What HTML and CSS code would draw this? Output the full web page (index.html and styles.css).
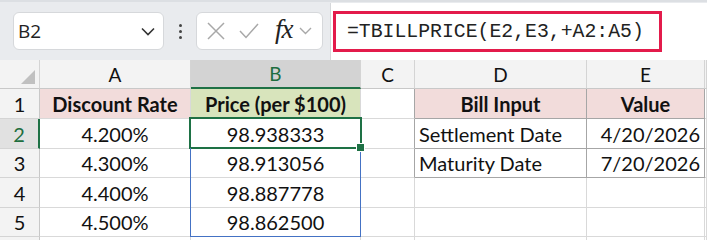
FILE: index.html
```html
<!DOCTYPE html>
<html lang="en">
<head>
  <meta charset="UTF-8" />
  <title>TBILLPRICE</title>
  <link rel="stylesheet" href="styles.css">
</head>
<body>
  <div class="toolbar">
    <div class="namebox">
      <span>B2</span>
      <svg class="chev" width="14" height="9" viewBox="0 0 14 9"><path d="M1 1.5 L7 7.5 L13 1.5" fill="none" stroke="#333" stroke-width="1.6"/></svg>
    </div>
    <div class="dots"><i></i><i></i><i></i></div>
    <div class="fxbox">
      <svg width="18" height="18" viewBox="0 0 18 18"><path d="M1 1 L17 17 M17 1 L1 17" stroke="#a8a8a8" stroke-width="1.5"/></svg>
      <svg width="20" height="16" viewBox="0 0 20 16"><path d="M1 8 L7 14.5 L19 1" fill="none" stroke="#a8a8a8" stroke-width="1.5"/></svg>
      <span class="fx">fx</span>
      <svg width="13" height="8" viewBox="0 0 13 8"><path d="M1 1 L6.5 6.5 L12 1" fill="none" stroke="#a8a8a8" stroke-width="1.4"/></svg>
    </div>
    <div class="formula">
      <div class="mark">=TBILLPRICE(E2,E3,+A2:A5)</div>
    </div>
  </div>

  <div class="sheet">
    <div class="hd corner"></div>
    <div class="hd">A</div>
    <div class="hd sel">B</div>
    <div class="hd">C</div>
    <div class="hd">D</div>
    <div class="hd">E</div>
    <div class="hd end"></div>

    <div class="rh">1</div>
    <div class="c pink b">Discount Rate</div>
    <div class="c green b">Price (per $100)</div>
    <div class="c edge"></div>
    <div class="c pink b box">Bill Input</div>
    <div class="c pink b box">Value</div>
    <div class="c"></div>

    <div class="rh sel">2</div>
    <div class="c">4.200%</div>
    <div class="c active">98.938333</div>
    <div class="c edge"></div>
    <div class="c box left">Settlement Date</div>
    <div class="c box right">4/20/2026</div>
    <div class="c"></div>

    <div class="rh">3</div>
    <div class="c">4.300%</div>
    <div class="c ref">98.913056</div>
    <div class="c edge"></div>
    <div class="c box left">Maturity Date</div>
    <div class="c box right">7/20/2026</div>
    <div class="c"></div>

    <div class="rh">4</div>
    <div class="c">4.400%</div>
    <div class="c ref">98.887778</div>
    <div class="c"></div>
    <div class="c"></div>
    <div class="c"></div>
    <div class="c"></div>

    <div class="rh">5</div>
    <div class="c">4.500%</div>
    <div class="c ref last">98.862500</div>
    <div class="c"></div>
    <div class="c"></div>
    <div class="c"></div>
    <div class="c"></div>

    <div class="rh"></div>
    <div class="c"></div>
    <div class="c"></div>
    <div class="c"></div>
    <div class="c"></div>
    <div class="c"></div>
    <div class="c"></div>
  </div>
</body>
</html>
```

FILE: styles.css
```css
body { margin: 0; width: 707px; height: 240px; overflow: hidden; background: #fff; font-family: Lato, "Liberation Sans", sans-serif; }

.toolbar {
  height: 60px;
  background: #e9ebee;
  border-top: 2px solid #dcdfe3;
  box-sizing: border-box;
  display: flex;
  align-items: center;
  padding-left: 13px;
}
.namebox {
  width: 151px;
  height: 38px;
  box-sizing: border-box;
  background: #fff;
  border: 1px solid #d6d8db;
  border-radius: 6px;
  display: flex;
  align-items: center;
  justify-content: space-between;
  padding: 0 8px 0 4px;
  font-family: "Open Sans", "Liberation Sans", sans-serif;
  font-size: 19px;
  color: #222;
}
.dots { width: 32px; display: flex; flex-direction: column; align-items: center; gap: 3px; }
.dots i { width: 3px; height: 3px; background: #444; border-radius: 50%; }
.fxbox {
  width: 127px;
  height: 38px;
  box-sizing: border-box;
  background: #fff;
  border: 1px solid #d6d8db;
  border-radius: 6px;
  display: flex;
  align-items: center;
  gap: 14px;
  padding-left: 10px;
}
.fx { font-family: "Liberation Serif", serif; font-style: italic; font-size: 27px; color: #222; margin: -4px -8px 0 2px; letter-spacing: -1px; }
.formula {
  margin-left: 7px;
  flex: 1;
  align-self: stretch;
  margin-top: 1px;
  background: #fff;
  border-left: 1px solid #d6d8db;
  display: flex;
  align-items: center;
}
.mark {
  width: 329px;
  height: 41px;
  box-sizing: border-box;
  margin-left: 2px;
  border: 3px solid #e31b4b;
  display: flex;
  align-items: center;
  padding-left: 11px;
  font-family: "Liberation Mono", monospace;
  font-size: 19.8px;
  color: #222;
}

.sheet {
  display: grid;
  grid-template-columns: 40px 151px 170px 54px 172px 118px 2px;
  grid-template-rows: 29px 30px 30px 29px 30px 29px 10px;
  font-size: 20px;
  color: #111;
}
.hd {
  background: #f3f3f3;
  border-right: 1px solid #d4d4d4;
  border-bottom: 1px solid #c8c8c8;
  box-sizing: border-box;
  display: flex;
  align-items: center;
  justify-content: center;
  font-size: 19px;
}
.hd.corner { position: relative; }
.hd.corner::after {
  content: "";
  position: absolute;
  right: 4px;
  bottom: 4px;
  border-left: 14px solid transparent;
  border-bottom: 14px solid #c0c0c0;
}
.hd.sel { background: #d3d3d3; color: #1e6e3f; border-bottom: 2px solid #1e7145; }
.rh {
  background: #f3f3f3;
  border-right: 1px solid #c8c8c8;
  border-bottom: 1px solid #d4d4d4;
  box-sizing: border-box;
  display: flex;
  align-items: center;
  justify-content: center;
}
.rh.sel { background: #e1e1e1; color: #1e6e3f; border-right: 2px solid #1e7145; }
.c {
  border-right: 1px solid #d9d9d9;
  border-bottom: 1px solid #d9d9d9;
  box-sizing: border-box;
  display: flex;
  align-items: center;
  justify-content: center;
  position: relative;
  white-space: nowrap;
}
.b { font-weight: bold; }
.pink { background: #f2dcdb; }
.green { background: #d8e4bc; }
.box { border-right-color: #a6a6a6; border-bottom-color: #a6a6a6; }
.edge { border-right-color: #a6a6a6; }
.left { justify-content: flex-start; padding-left: 4px; }
.right { justify-content: flex-end; padding-right: 4px; }

.active::after {
  content: "";
  position: absolute;
  inset: -2px -2px -1px -2px;
  border: 2px solid #1e7145;
}
.active::before {
  content: "";
  position: absolute;
  right: -5px;
  bottom: -4px;
  width: 7px;
  height: 7px;
  background: #1e7145;
  border: 1px solid #fff;
  z-index: 2;
}
.ref::after {
  content: "";
  position: absolute;
  inset: -1px -1px 0 -1px;
  border-left: 1px solid #4472c4;
  border-right: 1px solid #4472c4;
}
.ref.last::after { border-bottom: 1px solid #4472c4; bottom: -1px; }
```
